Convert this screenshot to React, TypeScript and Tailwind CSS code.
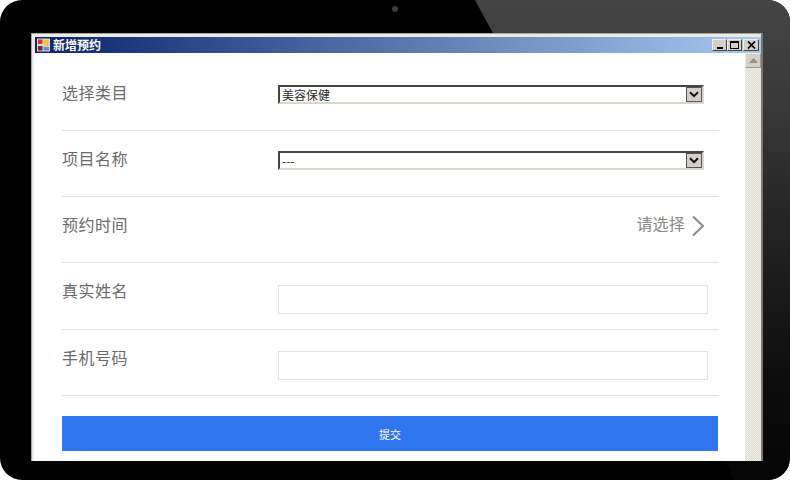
const cjk = "font-['Noto_Sans_CJK_SC','Noto_Sans',sans-serif]";

function Select({ value }: { value: string }) {
  return (
    <div className="flex h-[19px] w-[426px] items-center border-2 border-t-[#444444] border-l-[#444444] border-r-[#d8d6cd] border-b-[#d8d6cd] bg-white pl-[2px]">
      <span className="flex-1 text-[12px] leading-none text-[#2a2a2a]">{value}</span>
      <span className="flex h-[15px] w-[16px] items-center justify-center border border-[#555555] bg-[#d4d0c8]">
        <svg width="10" height="7" viewBox="0 0 10 7" fill="none">
          <path d="M1 1.2 5 5.2 9 1.2" stroke="#111" strokeWidth="2" />
        </svg>
      </span>
    </div>
  );
}

function Row({ label, children, tall }: { label: string; children?: React.ReactNode; tall?: boolean }) {
  return (
    <div className={`flex border-b border-[#e3e3e3] ${tall ? "h-[67px]" : "h-[66px]"}`}>
      <div className="w-[216px] pt-[15px] text-[16px] leading-[24px] tracking-[0.5px] text-[#6a6a6a]">{label}</div>
      <div className="flex-1 pt-[20px]">{children}</div>
    </div>
  );
}

function CaptionButton({ children, wide }: { children: React.ReactNode; wide?: boolean }) {
  return (
    <span className={`flex h-[12px] items-center justify-center border border-b-[#444] border-r-[#444] border-t-[#eee] border-l-[#eee] bg-[#d4d0c8] ${wide ? "w-[16px]" : "w-[15px]"}`}>
      {children}
    </span>
  );
}

export default function App() {
  return (
    <div className={`h-[480px] w-[790px] overflow-hidden bg-white ${cjk}`}>
      <div className="relative h-full w-full overflow-hidden rounded-[22px] bg-black pl-[31px] pt-[33px]">
        <div className="absolute inset-0 bg-[linear-gradient(180deg,#444444_0%,#3a3a3a_20%,#252525_45%,#0c0c0c_80%,#050505_100%)] [clip-path:polygon(475px_0,100%_0,100%_100%,735px_100%)]" />
        <div className="absolute left-[392px] top-[6px] h-[6px] w-[6px] rounded-full bg-[#3c3c3c]" />

        <div className="relative flex h-[428px] w-[732px] flex-col border-l border-t border-r-2 border-[#a9a89f] border-r-[#77766f] bg-[#eceae2] pl-[2px] pt-[3px]">
          <div className="ml-[1px] flex h-[16px] flex-none items-center bg-[linear-gradient(90deg,#0a246a_0%,#a6caf0_100%)] pl-[2px] pr-[2px]">
            <svg width="13" height="14" viewBox="0 0 14 14" className="flex-none">
              <rect width="14" height="14" fill="#dfe3f2" />
              <rect x="1" y="1" width="5" height="5" fill="#d33" />
              <rect x="7" y="1" width="6" height="7" fill="#f4c430" />
              <rect x="1" y="8" width="5" height="5" fill="#7a2a2a" />
              <rect x="7" y="9" width="6" height="4" fill="#6b8cc8" />
            </svg>
            <span className="ml-[3px] flex-1 text-[12px] font-bold leading-none text-white">新增预约</span>
            <div className="flex items-center">
              <CaptionButton><span className="mt-[6px] h-[2px] w-[6px] bg-black" /></CaptionButton>
              <CaptionButton><span className="h-[8px] w-[9px] border border-t-2 border-black" /></CaptionButton>
              <span className="w-[1px]" />
              <CaptionButton wide>
                <svg width="9" height="8" viewBox="0 0 9 8"><path d="M1 0.5 8 7.5M8 0.5 1 7.5" stroke="#000" strokeWidth="1.7" /></svg>
              </CaptionButton>
            </div>
          </div>

          <div className="flex min-h-0 flex-1">
            <div className="w-[712px] bg-white pl-[28px] pr-[26px] pt-[12px]">
              <Row label="选择类目"><Select value="美容保健" /></Row>
              <Row label="项目名称"><Select value="---" /></Row>
              <Row label="预约时间">
                <div className="flex items-start justify-end pr-[14px]">
                  <span className="-mt-[6px] text-[16px] leading-[24px] tracking-[0.2px] text-[#888888]">请选择</span>
                  <svg width="14" height="22" viewBox="0 0 14 22" fill="none" className="-mt-[2px] ml-[6px]">
                    <path d="M2 1.5 12 11 2 20.5" stroke="#8a8a8a" strokeWidth="2" />
                  </svg>
                </div>
              </Row>
              <Row label="真实姓名" tall><input className="mt-[2px] block h-[29px] w-[430px] border border-[#e2e2e2] bg-white outline-none" /></Row>
              <Row label="手机号码"><input className="mt-[1px] block h-[29px] w-[430px] border border-[#e2e2e2] bg-white outline-none" /></Row>
              <button className="mt-[20px] block h-[35px] w-[656px] bg-[#2f76ee] pt-[1px] text-[11px] text-white">提交</button>
            </div>
            <div className="flex w-[16px] flex-col bg-[repeating-conic-gradient(#dcdbd5_0_25%,#f0efea_0_50%)] bg-[length:2px_2px]">
              <div className="flex h-[15px] items-center justify-center border border-b-[#999] border-r-[#999] border-t-[#eee] border-l-[#eee] bg-[#d4d0c8]">
                <svg width="9" height="5" viewBox="0 0 9 5"><path d="M4.5 0 9 5H0Z" fill="#8f8f8f" /></svg>
              </div>
            </div>
          </div>
        </div>
      </div>
    </div>
  );
}
